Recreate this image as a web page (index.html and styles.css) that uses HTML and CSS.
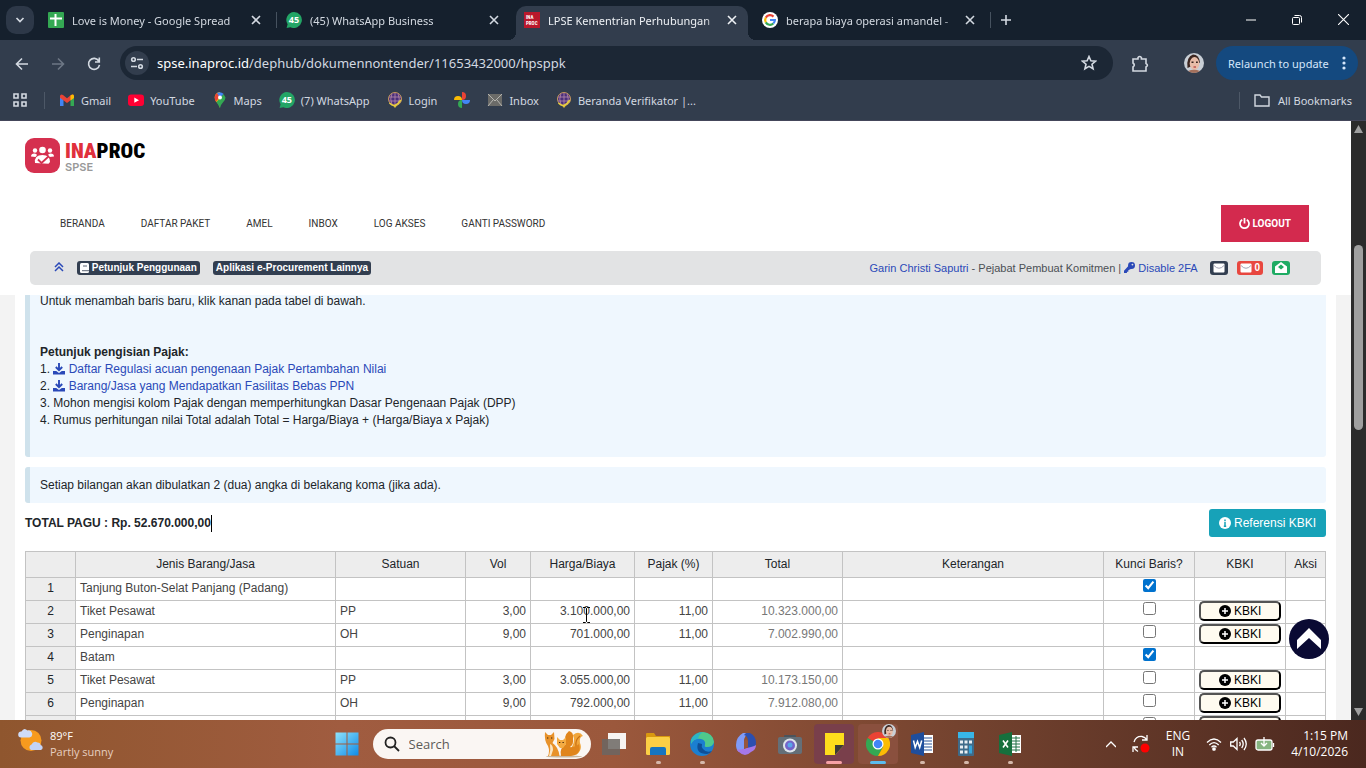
FILE: index.html
```
<!DOCTYPE html>
<html lang="id">
<head>
    <meta charset="UTF-8">
    <meta name="viewport" content="width=device-width, initial-scale=1.0">
    <title>LPSE Kementrian Perhubungan</title>
    <link rel="stylesheet" href="styles.css">
</head>
<body>
    <svg class="defs" aria-hidden="true">
        <symbol id="x" viewBox="0 0 10 10"><path d="M1 1l8 8M9 1L1 9" stroke="currentColor" stroke-width="1.6"/></symbol>
        <symbol id="wa" viewBox="0 0 16 16"><path d="M8 0a8 8 0 1 1-3.6 15.2L.6 16l1-3.700A8 8 0 0 1 8 0z" fill="#23a566"/></symbol>
        <symbol id="globe" viewBox="0 0 16 16"><path d="M4 11l4 5 4-5z" fill="#e3c13c"/><circle cx="8" cy="7" r="6.500" fill="#4a2f7c" stroke="#c99a5b"/><path d="M2 5h12M2 9h12M8 1v12M5 1.500Q2.500 7 5 12.500M11 1.500q2.500 5.500 0 11" fill="none" stroke="#b98aa8" stroke-width=".8"/><path d="M2.500 11Q8 17 13.800 8" fill="none" stroke="#e8cf3f" stroke-width="1.500"/></symbol>
        <symbol id="env" viewBox="0 0 12 10"><rect x=".5" y=".5" width="11" height="9" rx="1" fill="#fff"/><path d="M1 2.500Q6 8 11 2.500" fill="none" stroke="#99a" stroke-width=".9"/></symbol>
        <symbol id="plus" viewBox="0 0 12 12"><circle cx="6" cy="6" r="6" fill="#000"/><path d="M6 3v6M3 6h6" stroke="#fff" stroke-width="1.500"/></symbol>
        <symbol id="dl" viewBox="0 0 12 12"><path d="M6 0v7M2.800 4L6 7.200 9.200 4" fill="none" stroke="currentColor" stroke-width="1.900"/><path d="M0 8h3.200L6 10 8.800 8H12v3.500H0z" fill="currentColor"/></symbol>
        <symbol id="face" viewBox="0 0 20 20"><circle cx="10" cy="10" r="10" fill="#c9cfd6"/><path d="M3.500 15Q2 4 9 1.500q6 0 7 8z" fill="#3c2620"/><ellipse cx="10.500" cy="10.500" rx="4.800" ry="6.500" fill="#e8bda8"/><path d="M4 18q6-2.500 12 0-6 4-12 0z" fill="#a3705c"/><path d="M7.500 9.200h2M12 9.200h1.800" stroke="#33221d"/><path d="M9.500 14h2.500" stroke="#b33a3a" stroke-width="1.200"/></symbol>
    </svg>

    <!-- browser -->
    <div class="tabs">
        <button class="tab-search" aria-label="Search tabs"><svg width="10" height="10" viewBox="0 0 10 10"><path d="M1.500 3L5 6.500 8.500 3" fill="none" stroke="currentColor" stroke-width="1.700"/></svg></button>
        <div class="tab">
            <svg class="fav" viewBox="0 0 16 16"><rect width="16" height="16" rx="1" fill="#34a853"/><path d="M2 6.500h12M7.500 2v12" stroke="#fff" stroke-width="2"/></svg>
            <span class="tab-title">Love is Money - Google Spread</span>
            <button class="tab-close" aria-label="Close"><svg><use href="#x"/></svg></button>
        </div>
        <div class="tab split">
            <span class="fav wa"><svg><use href="#wa"/></svg><b>45</b></span>
            <span class="tab-title">(45) WhatsApp Business</span>
            <button class="tab-close" aria-label="Close"><svg><use href="#x"/></svg></button>
        </div>
        <div class="tab active">
            <span class="fav ina"><b>INA</b><b>PROC</b></span>
            <span class="tab-title">LPSE Kementrian Perhubungan</span>
            <button class="tab-close" aria-label="Close"><svg><use href="#x"/></svg></button>
        </div>
        <div class="tab">
            <svg class="fav" viewBox="0 0 16 16"><circle cx="8" cy="8" r="8" fill="#fff"/><g fill="none" stroke-width="2.200"><path d="M11.500 4.600A4.900 4.900 0 0 0 3.800 5.600" stroke="#ea4335"/><path d="M3.800 5.600a4.900 4.900 0 0 0 0 4.800" stroke="#fbbc05"/><path d="M3.800 10.400a4.900 4.900 0 0 0 7.500 1.100" stroke="#34a853"/><path d="M11.300 11.500A4.900 4.900 0 0 0 12.900 8H8" stroke="#4285f4"/></g></svg>
            <span class="tab-title">berapa biaya operasi amandel -</span>
            <button class="tab-close" aria-label="Close"><svg><use href="#x"/></svg></button>
        </div>
        <button class="new-tab split" aria-label="New tab"><svg width="10" height="10" viewBox="0 0 10 10"><path d="M5 0v10M0 5h10" stroke="currentColor" stroke-width="1.600"/></svg></button>
        <div class="win">
            <button aria-label="Minimize"><svg width="10" height="10" viewBox="0 0 10 10"><path d="M0 5h10" stroke="#fff"/></svg></button>
            <button aria-label="Restore"><svg width="10" height="10" viewBox="0 0 10 10" fill="none" stroke="#fff"><rect x=".5" y="2.500" width="7" height="7" rx="1"/><path d="M2.500.5h5q2 0 2 2v5"/></svg></button>
            <button aria-label="Close window"><svg width="11" height="11" viewBox="0 0 10 10"><path d="M0 0l10 10M10 0L0 10" stroke="#fff"/></svg></button>
        </div>
    </div>
    <div class="chrome">
        <div class="toolbar">
            <button aria-label="Back"><svg viewBox="0 0 16 16"><path d="M14 8H3M8 2.500L2.500 8 8 13.500"/></svg></button>
            <button class="dim" aria-label="Forward"><svg viewBox="0 0 16 16"><path d="M2 8h11M8 2.500L13.500 8 8 13.500"/></svg></button>
            <button aria-label="Reload"><svg viewBox="0 0 16 16"><path d="M12.800 5A5.500 5.500 0 1 0 13.500 8.800M13.300 1.500V6H9"/></svg></button>
            <div class="omnibox">
                <span class="site"><svg viewBox="0 0 16 16"><circle cx="4.500" cy="4.500" r="1.800"/><path d="M8 4.500h6M2 11.500h6"/><circle cx="11.500" cy="11.500" r="1.800"/></svg></span>
                <span class="url"><b>spse.inaproc.id</b>/dephub/dokumennontender/11653432000/hpsppk</span>
                <svg class="star" viewBox="0 0 16 16"><path d="M8 1.500l1.900 4.300 4.600.4-3.500 3 1.100 4.600L8 11.400l-4.100 2.400L5 9.200l-3.500-3 4.600-.4z"/></svg>
            </div>
            <button class="ext" aria-label="Extensions"><svg viewBox="0 0 18 18"><path d="M2 4h5V2.500q1.700-2 3.400 0V4H15v4.500q2.800 1.700 0 3.400V16H2v-4q2.600-2 0-4z"/></svg></button>
            <svg class="avatar"><use href="#face"/></svg>
            <button class="relaunch">Relaunch to update <svg width="4" height="16" viewBox="0 0 4 16"><circle cx="2" cy="3" r="1.600"/><circle cx="2" cy="8" r="1.600"/><circle cx="2" cy="13" r="1.600"/></svg></button>
        </div>
        <div class="bookmarks">
            <svg class="apps" viewBox="0 0 14 14" fill="none" stroke="currentColor" stroke-width="1.600"><path d="M1 1h4v4H1zM9 1h4v4H9zM1 9h4v4H1zM9 9h4v4H9z"/></svg>
            <a href="#" class="first"><svg viewBox="0 0 16 16"><path d="M1 14V4h3.500v10z" fill="#4285f4"/><path d="M11.500 14V4H15v10z" fill="#34a853"/><path d="M1 4q.5-2.500 3-1L8 6.200 12 3q2.500-1.500 3 1v1.800L8 11 1 5.800z" fill="#ea4335"/><path d="M11.500 3.500q3-2 3.500.5v2l-3.500 2.600z" fill="#fbbc04"/></svg>Gmail</a>
            <a href="#"><svg viewBox="0 0 16 16"><rect y="2.500" width="16" height="11.500" rx="3" fill="#f03"/><path d="M6.300 5.500v5.300L11 8.200z" fill="#fff"/></svg>YouTube</a>
            <a href="#"><svg viewBox="0 0 16 16"><path d="M8 0a5.500 5.500 0 0 0-5.300 6Q3 9 5.500 11 7.500 13 8 16z" fill="#fbbc04"/><path d="M8 16q.5-3 2.500-5 3-3 3-5.500L11.500 2 4.500 10z" fill="#34a853"/><path d="M2.700 5A5.500 5.500 0 0 1 5 1l3 4-4 4.500Q2.500 8 2.700 5z" fill="#ea4335"/><path d="M5 1q3.500-2 6.500.8L8 6z" fill="#4285f4"/><circle cx="8" cy="5.500" r="2" fill="#fff"/></svg>Maps</a>
            <a href="#"><span class="wa"><svg><use href="#wa"/></svg><b>45</b></span>(7) WhatsApp</a>
            <a href="#"><svg><use href="#globe"/></svg>Login</a>
            <a href="#" aria-label="Photos"><svg viewBox="0 0 16 16"><path d="M8 8V0a4 4 0 0 1 0 8z" fill="#ea4335"/><path d="M8 8h8a4 4 0 0 1-8 0z" fill="#4285f4"/><path d="M8 8v8a4 4 0 0 1 0-8z" fill="#34a853"/><path d="M8 8H0a4 4 0 0 1 8 0z" fill="#fbbc04"/></svg></a>
            <a href="#"><svg viewBox="0 0 16 16"><rect x="1" y="2" width="14" height="12" fill="#6b6b68"/><path d="M1 2l7 7 7-7M1 14l5-6M15 14l-5-6" fill="none" stroke="#b5b5b0"/></svg>Inbox</a>
            <a href="#"><svg><use href="#globe"/></svg>Beranda Verifikator |...</a>
            <a href="#" class="all"><svg viewBox="0 0 16 16" fill="none" stroke="currentColor" stroke-width="1.400"><path d="M1 3h5l1.500 2H15v9H1z"/></svg>All Bookmarks</a>
        </div>
    </div>

    <!-- page -->
    <div class="viewport">
        <div class="page">
            <header class="header">
                <a href="#" class="logo">
                    <svg width="35" height="35" viewBox="0 0 35 35"><rect width="35" height="35" rx="9" fill="#d5304f"/><g fill="#fff"><circle cx="17.500" cy="12" r="3.300"/><circle cx="10" cy="12.500" r="2.200"/><circle cx="25" cy="12.500" r="2.200"/><path d="M6 18.500q0-3 3.500-3 2 0 2.500 1.500l-1.500 2zM29 18.500q0-3-3.500-3-2 0-2.500 1.500l1.500 2z"/><path d="M10 25q-1-8 7.500-8 7.500 0 7.500 7l-1.500 1.800z"/></g><path d="M13 21.500l3.500 3.500 7.500-7" fill="none" stroke="#d5304f" stroke-width="1.800"/></svg>
                    <span class="brand"><span class="brand-name"><span>INA</span>PROC</span><span class="brand-sub">SPSE</span></span>
                </a>
                <nav class="nav">
                    <a href="#">BERANDA</a>
                    <a href="#">DAFTAR PAKET</a>
                    <a href="#">AMEL</a>
                    <a href="#">INBOX</a>
                    <a href="#">LOG AKSES</a>
                    <a href="#">GANTI PASSWORD</a>
                    <button class="logout"><svg width="11" height="11" viewBox="0 0 12 12" fill="none" stroke="#fff" stroke-width="1.900"><path d="M3.500 2a4.900 4.900 0 1 0 5 0M6 0v6"/></svg> LOGOUT</button>
                </nav>
                <div class="userbar">
                    <a href="#" class="up" aria-label="Naik"><svg width="10" height="10" viewBox="0 0 10 10" fill="none" stroke="currentColor" stroke-width="1.500"><path d="M1 5l4-4 4 4M1 9l4-4 4 4"/></svg></a>
                    <a href="#" class="badge"><svg width="9" height="10" viewBox="0 0 9 10"><rect width="9" height="10" rx="1.500" fill="#fff"/><path d="M2 7.700h7M3 3h4" stroke="#323e50" stroke-width=".8"/></svg> Petunjuk Penggunaan</a>
                    <a href="#" class="badge">Aplikasi e-Procurement Lainnya</a>
                    <p class="user"><a href="#">Garin Christi Saputri</a> - Pejabat Pembuat Komitmen | <a href="#"><svg width="11" height="11" viewBox="0 0 12 12"><circle cx="8.200" cy="3.800" r="3.800" fill="currentColor"/><circle cx="9.200" cy="2.800" r="1" fill="#e2e3e4"/><path d="M5 4L0 9.500V12h3.200v-1.500h1.500V9L8.500 7z" fill="currentColor"/></svg> Disable 2FA</a></p>
                    <a href="#" class="badge" aria-label="Pesan"><svg width="12" height="10"><use href="#env"/></svg></a>
                    <a href="#" class="badge red"><svg width="12" height="10"><use href="#env"/></svg> 0</a>
                    <a href="#" class="badge green" aria-label="Pesan terbuka"><svg width="12" height="11" viewBox="0 0 12 11"><path d="M0 4.500L6 0l6 4.500V11H0z" fill="#fff"/><path d="M3 5l3-2.500L9 5 6 7.500z" fill="#1eab63"/></svg></a>
                </div>
            </header>

            <main class="content">
                <div class="alert alert-top">
                    <p>Untuk menambah baris baru, klik kanan pada tabel di bawah.</p>
                    <br><br>
                    <p><b>Petunjuk pengisian Pajak:</b></p>
                    <p>1. <a href="#"><svg><use href="#dl"/></svg> Daftar Regulasi acuan pengenaan Pajak Pertambahan Nilai</a></p>
                    <p>2. <a href="#"><svg><use href="#dl"/></svg> Barang/Jasa yang Mendapatkan Fasilitas Bebas PPN</a></p>
                    <p>3. Mohon mengisi kolom Pajak dengan memperhitungkan Dasar Pengenaan Pajak (DPP)</p>
                    <p>4. Rumus perhitungan nilai Total adalah Total = Harga/Biaya + (Harga/Biaya x Pajak)</p>
                </div>
                <div class="alert">
                    <p>Setiap bilangan akan dibulatkan 2 (dua) angka di belakang koma (jika ada).</p>
                </div>
                <div class="pagu">
                    <b class="caret">TOTAL PAGU : Rp. 52.670.000,00</b>
                    <button class="btn-info"><svg width="12" height="12" viewBox="0 0 12 12"><circle cx="6" cy="6" r="6" fill="#fff"/><path d="M6 2.500v1.700M6 5v4.300M4.800 9.200h2.400" stroke="#17a2b8" stroke-width="1.500"/></svg> Referensi KBKI</button>
                </div>
                <table class="grid">
                    <colgroup>
                        <col class="c-no"><col class="c-jenis"><col class="c-satuan"><col class="c-vol"><col class="c-harga"><col class="c-pajak"><col class="c-total"><col><col class="c-kunci"><col class="c-kbki"><col class="c-aksi">
                    </colgroup>
                    <thead>
                        <tr><th></th><th>Jenis Barang/Jasa</th><th>Satuan</th><th>Vol</th><th>Harga/Biaya</th><th>Pajak (%)</th><th>Total</th><th>Keterangan</th><th>Kunci Baris?</th><th>KBKI</th><th>Aksi</th></tr>
                    </thead>
                    <tbody>
                        <tr><th>1</th><td>Tanjung Buton-Selat Panjang (Padang)</td><td></td><td></td><td></td><td></td><td></td><td></td><td><input type="checkbox" aria-label="Kunci baris 1" checked></td><td></td><td></td></tr>
                        <tr><th>2</th><td>Tiket Pesawat</td><td>PP</td><td class="num">3,00</td><td class="num hover">3.100.000,00<svg class="ibeam" width="7" height="16" viewBox="0 0 7 16" fill="none" stroke="#000"><path d="M0 .5h2.500l1 1 1-1H7M3.500 1.500v13M0 15.500h2.500l1-1 1 1H7"/></svg></td><td class="num">11,00</td><td class="num ro">10.323.000,00</td><td></td><td><input type="checkbox" aria-label="Kunci baris 2"></td><td><button class="kbki"><svg><use href="#plus"/></svg> KBKI</button></td><td></td></tr>
                        <tr><th>3</th><td>Penginapan</td><td>OH</td><td class="num">9,00</td><td class="num">701.000,00</td><td class="num">11,00</td><td class="num ro">7.002.990,00</td><td></td><td><input type="checkbox" aria-label="Kunci baris 3"></td><td><button class="kbki"><svg><use href="#plus"/></svg> KBKI</button></td><td></td></tr>
                        <tr><th>4</th><td>Batam</td><td></td><td></td><td></td><td></td><td></td><td></td><td><input type="checkbox" aria-label="Kunci baris 4" checked></td><td></td><td></td></tr>
                        <tr><th>5</th><td>Tiket Pesawat</td><td>PP</td><td class="num">3,00</td><td class="num">3.055.000,00</td><td class="num">11,00</td><td class="num ro">10.173.150,00</td><td></td><td><input type="checkbox" aria-label="Kunci baris 5"></td><td><button class="kbki"><svg><use href="#plus"/></svg> KBKI</button></td><td></td></tr>
                        <tr><th>6</th><td>Penginapan</td><td>OH</td><td class="num">9,00</td><td class="num">792.000,00</td><td class="num">11,00</td><td class="num ro">7.912.080,00</td><td></td><td><input type="checkbox" aria-label="Kunci baris 6"></td><td><button class="kbki"><svg><use href="#plus"/></svg> KBKI</button></td><td></td></tr>
                        <tr><th></th><td></td><td></td><td></td><td></td><td></td><td></td><td></td><td><input type="checkbox" aria-label="Kunci baris berikutnya"></td><td><button class="kbki" aria-label="KBKI"></button></td><td></td></tr>
                    </tbody>
                </table>
            </main>
            <button class="to-top" aria-label="Ke atas"><svg width="24" height="22" viewBox="0 0 24 22"><path d="M12 0l12 12v9L12 10 0 21v-9z" fill="#fff"/></svg></button>
        </div>
        <div class="scrollbar">
            <svg width="9" height="8" viewBox="0 0 9 8"><path d="M4.500 0L9 8H0z" fill="#9f9f9f"/></svg>
            <div class="track"><div class="thumb"></div></div>
            <svg width="9" height="8" viewBox="0 0 9 8"><path d="M4.500 8L9 0H0z" fill="#9f9f9f"/></svg>
        </div>
    </div>

    <!-- taskbar -->
    <footer class="taskbar">
        <div class="weather">
            <svg width="26" height="24" viewBox="0 0 26 24"><circle cx="13" cy="12.500" r="10.500" fill="#f79a1e"/><path d="M3 9.500a3 3 0 0 1 .5-6Q6-1 9.500 2.500a3.500 3.500 0 0 1 2 7z" fill="#cfdcf8"/><path d="M13 22a3 3 0 0 1 .5-5.500q2-4 6-2 3 .3 3 2.500a2.600 2.600 0 0 1 .5 5z" fill="#c3d3f7"/></svg>
            <p>89°F<span>Partly sunny</span></p>
        </div>
        <div class="apps-row">
            <button class="app" aria-label="Start"><svg viewBox="0 0 24 24"><defs><linearGradient id="win" x2="1" y2="1"><stop stop-color="#8fe3fb"/><stop offset="1" stop-color="#0f8be8"/></linearGradient></defs><path d="M.5.5h11v11H.5zM12.500.5h11v11h-11zM.5 12.500h11v11H.5zM12.500 12.500h11v11h-11z" fill="url(#win)"/></svg></button>
            <label class="search">
                <svg width="16" height="16" viewBox="0 0 16 16" fill="none" stroke="#222" stroke-width="1.800"><circle cx="6.500" cy="6.500" r="5"/><path d="M10 10l5 5"/></svg>
                <input type="text" placeholder="Search">
                <svg width="40" height="27" viewBox="0 0 40 27"><ellipse cx="20" cy="25.500" rx="18" ry="1" fill="#c9b79d"/><path d="M29 4q6-5 10 1-4 1-3 7 3 7-4 12-4-1-6-6 6-6 3-14z" fill="#f0a63c"/><path d="M36 5q-5 4-4 10 2 4-2 9" fill="none" stroke="#c96f12" stroke-width="1.200"/><path d="M17 25q-2-8 5-12-3-8 3-13 5 1 4 8 1 5-3 8 5 1 9-3 3 10-8 12z" fill="#e0851c"/><path d="M1 1l3 3h3l3-3 .5 7-2 4q6 4 7 13H4q2-5 0-10Q0 10 1 1z" fill="#e8922a"/><path d="M13 6l3 3h3l3-3v7l-3 4h-3l-3-4z" fill="#f4ab42"/><path d="M6 13q3 1 3 6l-2 6H5q2-6 1-12z" fill="#fbe6c4"/><path d="M3 7h1.300M7 7h1.300M15 11.500h1.300M18.500 11.500h1.300" stroke="#3b210b" stroke-width="1.200"/></svg>
            </label>
            <button class="app" aria-label="Task view"><svg viewBox="0 0 24 24"><rect x="6" y="1" width="18" height="16" fill="#f6f4f2"/><rect y="7" width="18" height="16" fill="#6b6663" opacity=".85"/></svg></button>
            <button class="app run" aria-label="File Explorer"><svg viewBox="0 0 24 24"><path d="M0 2q0-1 1-1h7l2 3h14v6H0z" fill="#d9980f"/><rect y="5" width="24" height="18" rx="1.500" fill="#fbcf45"/><path d="M4 23v-6q0-2 2-2h12q2 0 2 2v6z" fill="#1675bf"/></svg></button>
            <button class="app run" aria-label="Edge"><svg viewBox="0 0 24 24"><circle cx="12" cy="12" r="12" fill="#1b7fd0"/><path d="M1 8Q5 0 13 0q10 1 11 10-1 5-7 5-3 0-2-2 1-5-4-6-7-1-10 5z" fill="#4fc98c"/><path d="M1 8q4-7 12-8-4 2-5 7-4 0-7 4z" fill="#2bb3c9"/><path d="M8 11q-3 11 9 11 3 0 5-3-6 2-9-2-2-2-1-5z" fill="#0e4f97"/></svg></button>
            <button class="app" aria-label="Microsoft 365"><svg viewBox="0 0 24 24"><path d="M15 1H9Q2 5 2 13q0 5 3 7l5-3V9q0-5 5-8z" fill="#7f9bf7"/><path d="M12 1h4q6 3 6 10 0 5-5 7l-3-2V9q0-5-4-6z" fill="#2b4fb0"/><path d="M22 13q0 5-5 7-3 3-6 3t-6-3q-2-1-2-3 3 1 6 0l8-2q4-1 5-2z" fill="#a578e8"/><path d="M10 9q2-3 4 0v6l-4 2z" fill="#96563c"/></svg></button>
            <button class="app" aria-label="Camera"><svg viewBox="0 0 24 24"><rect x="6" y="3" width="12" height="4" rx="1" fill="#4b545c"/><rect y="5" width="24" height="17" rx="2" fill="#646f78"/><circle cx="12" cy="13.500" r="7" fill="#dfe5ea"/><circle cx="12" cy="13.500" r="5" fill="#7465c9"/><circle cx="12" cy="13" r="2.500" fill="#5aa6ea"/></svg></button>
            <button class="app run note" aria-label="Sticky Notes"><svg viewBox="0 0 24 24"><path d="M3 1h19v12l-9 10H3z" fill="#fddd1c"/><path d="M13 13h9l-9 10z" fill="#3b3a38"/></svg></button>
            <button class="app run current" aria-label="Chrome"><svg viewBox="0 0 24 24"><path d="M12 12L1.600 6A12 12 0 0 1 22.400 6z" fill="#ea4335"/><path d="M12 12L1.600 6A12 12 0 0 0 12 24l5-9z" fill="#34a853"/><path d="M12 6h10.400A12 12 0 0 1 12 24l5-9z" fill="#fbbc04"/><circle cx="12" cy="12" r="5.500" fill="#fff"/><circle cx="12" cy="12" r="4.300" fill="#4285f4"/></svg><svg class="mini"><use href="#face"/></svg></button>
            <button class="app run" aria-label="Word"><svg viewBox="0 0 24 24"><rect x="12" y="3" width="11" height="18" fill="#fff"/><path d="M14 6h8M14 9h8M14 12h8M14 15h8M14 18h8" stroke="#2b579a" stroke-width="1.200"/><path d="M1 3l13-3v24L1 21z" fill="#1f4e9c"/><path d="M3.500 8.500l1.700 7 2.300-6 2.200 6 2-7" fill="none" stroke="#fff" stroke-width="1.500"/></svg></button>
            <button class="app run" aria-label="Calculator"><svg viewBox="0 0 24 24"><rect x="4" width="16" height="24" rx="1" fill="#3f6b89"/><rect x="4" width="16" height="6" fill="#38b6e8"/><path d="M6 10h3M10.500 10h3M15 10h3M6 15h3M10.500 15h3M6 20h3M10.500 20h3" stroke="#e8eef2" stroke-width="3"/><path d="M16.500 13.500v8" stroke="#36a4d8" stroke-width="3"/></svg></button>
            <button class="app run" aria-label="Excel"><svg viewBox="0 0 24 24"><rect x="12" y="3" width="11" height="18" fill="#fff"/><path d="M14 6h8M14 9h8M14 12h8M14 15h8M14 18h8M18 4v16" stroke="#217346"/><path d="M1 3l13-3v24L1 21z" fill="#16703d"/><path d="M5 8.500l5 7M10 8.500l-5 7" fill="none" stroke="#fff" stroke-width="1.600"/></svg></button>
        </div>
        <div class="tray">
            <svg width="10" height="8" viewBox="0 0 10 8"><path d="M0 7l5-5 5 5"/></svg>
            <svg width="18" height="18" viewBox="0 0 18 18"><path d="M2 7q2-6 8-5.500 3 .5 5 3.500M15 0v5h-5M1 17v-5h5M2 12q1 3 4 4.500"/><circle cx="13" cy="13" r="4.500" fill="red" stroke="none"/></svg>
            <p class="lang">ENG<br>IN</p>
            <div class="status">
                <svg width="16" height="14" viewBox="0 0 16 14"><path d="M1 5.500q7-7 14 0M3.300 8q4.700-4.700 9.400 0M5.500 10.300q2.500-2.500 5 0"/><circle cx="8" cy="12" r="1.200" fill="#fff"/></svg>
                <svg width="17" height="14" viewBox="0 0 17 14"><path d="M.7 5v4h2.600L7 12.500v-11L3.300 5zM9.500 5q1.500 2 0 4M11.700 3q3 4 0 8M14 1q4.500 6 0 12"/></svg>
                <svg width="20" height="14" viewBox="0 0 20 14"><rect x="1" y="3" width="16" height="10" rx="2" fill="#86b581"/><path d="M18.500 6v4M9 0v9M6 6l3 3 3-3"/></svg>
            </div>
            <p class="clock">1:15 PM<br>4/10/2026</p>
        </div>
    </footer>
</body>
</html>
```
FILE: styles.css
```
:root {
    --strip: #15202d;
    --chrome: #323d4d;
    --chrome-text: #d3d9e1;
    --link: #2a49b8;
    --badge: #323e50;
    --line: #c3c3c3;
    --ui-font: "Noto Sans", "Open Sans", sans-serif;
}

* {
    margin: 0;
    padding: 0;
    box-sizing: border-box;
}

body {
    height: 100vh;
    display: flex;
    flex-direction: column;
    overflow: hidden;
    font-family: "Liberation Sans", Arial, sans-serif;
    font-size: 12px;
    line-height: 17px;
    color: #212529;
}

a {
    color: var(--link);
    text-decoration: none;
}

button {
    border: none;
    background: none;
    font: inherit;
    color: inherit;
    cursor: pointer;
}

svg {
    flex: none;
}

.defs {
    display: none;
}

/* tab strip */
.tabs {
    display: flex;
    align-items: center;
    height: 40px;
    padding-left: 6px;
    background: var(--strip);
    color: var(--chrome-text);
    font-family: var(--ui-font);
    font-size: 11px;
}

.tab-search {
    width: 28px;
    height: 28px;
    margin-right: 4px;
    border-radius: 10px;
    background: #2d3848;
}

.tab {
    position: relative;
    z-index: 0;
    display: flex;
    flex: 0 1 238px;
    align-items: center;
    gap: 8px;
    height: 100%;
    padding: 0 15px 0 10px;
    min-width: 0;
}

.split::before {
    content: "";
    position: absolute;
    left: 0;
    top: 12px;
    width: 1px;
    height: 16px;
    background: #46525f;
}

.tab.active {
    color: #eef1f5;
}

.tab.active::before {
    content: "";
    position: absolute;
    z-index: -1;
    inset: 6px 4px 0 2px;
    border-radius: 10px 10px 0 0;
    background: var(--chrome);
}

.tab.active::after {
    content: "";
    position: absolute;
    z-index: -1;
    inset: auto -4px 0 -6px;
    height: 8px;
    background:
        radial-gradient(circle at 0 0, transparent 8px, var(--chrome) 8px) left / 8px 8px no-repeat,
        radial-gradient(circle at 100% 0, transparent 8px, var(--chrome) 8px) right / 8px 8px no-repeat;
}

.fav {
    width: 16px;
    height: 16px;
    flex: none;
}

.tab-title {
    flex: 1;
    overflow: hidden;
    white-space: nowrap;
    mask-image: linear-gradient(to right, #000 calc(100% - 14px), transparent);
}

.tab-close {
    display: flex;
}

.tab-close svg {
    width: 10px;
    height: 10px;
}

.wa {
    position: relative;
    width: 16px;
    height: 16px;
}

.wa svg {
    display: block;
    width: 16px;
    height: 16px;
}

.wa b {
    position: absolute;
    inset: 0;
    font-size: 9px;
    line-height: 16px;
    text-align: center;
    color: #fff;
}

.ina {
    display: flex;
    flex-direction: column;
    justify-content: center;
    padding-left: 2px;
    background: #b9182b;
    color: #fff;
    font: 5px/6px "Roboto Condensed", Roboto, sans-serif;
}

.new-tab {
    position: relative;
    height: 40px;
    padding: 0 11px;
}

.win {
    display: flex;
    margin-left: auto;
}

.win button {
    width: 46px;
    height: 40px;
}

/* toolbar */
.chrome {
    background: var(--chrome);
    color: var(--chrome-text);
    border-bottom: 1px solid #44465a;
    font-family: var(--ui-font);
    font-size: 11px;
}

.toolbar {
    display: flex;
    align-items: center;
    height: 46px;
    padding: 0 8px 0 4px;
}

.toolbar > button {
    width: 36px;
    height: 34px;
}

.toolbar svg {
    width: 16px;
    height: 16px;
    vertical-align: middle;
    fill: none;
    stroke: currentColor;
    stroke-width: 1.6px;
}

.toolbar .dim {
    color: #6d7785;
}

.omnibox {
    display: flex;
    flex: 1;
    align-items: center;
    height: 34px;
    margin-left: 8px;
    padding: 0 16px 0 5px;
    border-radius: 17px;
    background: #1c2735;
}

.site {
    width: 24px;
    height: 24px;
    border-radius: 12px;
    background: #323d4d;
    text-align: center;
    line-height: 22px;
}

.url {
    flex: 1;
    margin-left: 8px;
    font-size: 13px;
}

.url b {
    font-weight: 400;
    color: #fff;
}

.toolbar .ext {
    width: 54px;
}

.toolbar .ext svg {
    width: 18px;
    height: 18px;
}

.toolbar .avatar {
    width: 20px;
    height: 20px;
    margin: 0 12px 0 17px;
    stroke: none;
}

.toolbar .relaunch {
    display: flex;
    align-items: center;
    justify-content: space-between;
    width: 142px;
    padding: 0 12px;
    border-radius: 17px;
    background: #14497f;
    color: #d5e6fb;
    white-space: nowrap;
}

.toolbar .relaunch svg {
    width: 4px;
    fill: currentColor;
    stroke: none;
}

.bookmarks {
    display: flex;
    align-items: center;
    gap: 17px;
    height: 34px;
    padding: 0 14px 6px 13px;
}

.bookmarks a {
    display: flex;
    align-items: center;
    gap: 6px;
    color: inherit;
    white-space: nowrap;
}

.bookmarks a svg {
    width: 16px;
    height: 16px;
}

.bookmarks .apps {
    width: 14px;
    height: 14px;
}

.bookmarks .first,
.bookmarks .all {
    padding-left: 14px;
    border-left: 1px solid #4d5867;
}

.bookmarks .all {
    gap: 8px;
    margin-left: auto;
}

/* page */
.viewport {
    display: flex;
    flex: 1;
    min-height: 0;
}

.page {
    position: relative;
    flex: 1;
    overflow: hidden;
    background: #f3f3f3;
}

.header {
    position: relative;
    z-index: 1;
    padding: 17px 30px 10px;
    background: #fff;
}

.logo {
    display: flex;
    gap: 5px;
    margin-left: -5px;
}

.brand {
    display: flex;
    flex-direction: column;
    padding-top: 2px;
}

.brand-name {
    font: 900 21px/22px "Liberation Sans Narrow", "Roboto Condensed", "Liberation Sans", sans-serif;
    color: #000;
}

.brand-name span {
    color: #e0303c;
}

.brand-sub {
    font: 600 11px/10px Inter, sans-serif;
    color: #999;
}

.nav {
    display: flex;
    align-items: center;
    gap: 36px;
    margin-top: 32px;
    padding: 0 12px 0 30px;
    font-family: Roboto, sans-serif;
    font-size: 10px;
}

.nav a {
    color: #333;
}

.logout {
    width: 88px;
    height: 37px;
    margin-left: auto;
    background: #d32a4e;
    color: #fff;
    font-weight: bold;
}

.logout svg {
    vertical-align: -2px;
}

.userbar {
    display: flex;
    align-items: center;
    height: 34px;
    margin-top: 9px;
    padding: 0 31px 0 24px;
    border-radius: 5px;
    background: #e2e3e4;
    color: #4b4f54;
    font-size: 11px;
}

.up {
    margin-right: 13px;
}

.badge {
    height: 14px;
    margin-right: 13px;
    padding: 0 3px;
    border-radius: 3px;
    background: var(--badge);
    color: #fff;
    font-size: 10px;
    font-weight: bold;
    line-height: 14px;
    white-space: nowrap;
}

.badge svg {
    vertical-align: -2px;
}

.user {
    margin: 0 12px 0 auto;
}

.user svg {
    vertical-align: -1px;
}

.user ~ .badge {
    margin-right: 9px;
}

.user ~ .badge:last-child {
    margin-right: 0;
}

.red {
    background: #e8473f;
}

.green {
    background: #1eab63;
}

.content {
    margin: -2px 15px 0;
    padding: 0 10px;
    background: #fff;
}

.alert {
    margin-bottom: 10px;
    padding: 10px 10px 9px;
    border-left: 5px solid #cfe2ec;
    border-radius: 3px;
    background: #eff7fe;
}

.alert-top {
    padding: 0 10px 28px;
}

.alert svg {
    width: 12px;
    height: 12px;
    vertical-align: -2px;
}

.pagu {
    display: flex;
    align-items: center;
    justify-content: space-between;
    margin: -4px 0 14px;
}

.caret {
    border-right: 1px solid #000;
}

.btn-info {
    height: 28px;
    padding: 0 10px;
    border-radius: 3px;
    background: #17a2b8;
    color: #fff;
}

.btn-info svg {
    vertical-align: -2px;
}

/* item grid */
.grid {
    width: 100%;
    table-layout: fixed;
    border-collapse: collapse;
}

.grid th,
.grid td {
    height: 23px;
    padding: 0 4px;
    border: 1px solid var(--line);
    line-height: 20px;
    vertical-align: top;
}

.grid th {
    background: #ededed;
    font-weight: 400;
    text-align: center;
}

.grid thead th {
    height: 26px;
    line-height: 24px;
    white-space: nowrap;
}

.grid td {
    color: #444;
}

.c-no { width: 50px; }
.c-jenis { width: 260px; }
.c-satuan { width: 130px; }
.c-vol { width: 65px; }
.c-harga { width: 104px; }
.c-pajak { width: 78px; }
.c-total { width: 130px; }
.c-kunci { width: 91px; }
.c-kbki { width: 91px; }
.c-aksi { width: 40px; }

.grid .num {
    text-align: right;
}

.grid .ro {
    color: #777;
}

.hover {
    position: relative;
}

.ibeam {
    position: absolute;
    right: 44px;
    top: 6px;
}

.grid input {
    display: block;
    width: 13px;
    height: 13px;
    margin: 1px auto 0;
    accent-color: #0072ce;
}

.kbki {
    display: block;
    width: 100%;
    height: 20px;
    border: 2px outset #000;
    border-radius: 5px;
    background: #fffbf0;
    color: #000;
    line-height: 16px;
}

.kbki svg {
    width: 12px;
    height: 12px;
    vertical-align: -2px;
}

.to-top {
    position: absolute;
    right: 22px;
    bottom: 61px;
    width: 40px;
    height: 40px;
    border-radius: 50%;
    background: #0a0a33;
}

.to-top svg {
    vertical-align: middle;
}

.scrollbar {
    display: flex;
    flex-direction: column;
    align-items: center;
    width: 15px;
    padding: 4px 0;
    background: #2b2b2b;
}

.track {
    flex: 1;
    padding-top: 112px;
}

.thumb {
    width: 9px;
    height: 40%;
    border-radius: 5px;
    background: #9f9f9f;
}

/* taskbar */
.taskbar {
    display: grid;
    grid-template-columns: 1fr auto 1fr;
    align-items: center;
    height: 48px;
    background: linear-gradient(to right, #8f562e, #a05c40 25%, #9b583c 45%, #74432f 70%, #4b281f);
    color: #fff;
    font-family: "Open Sans", "Noto Sans", sans-serif;
    line-height: 16px;
}

.weather {
    display: flex;
    gap: 6px;
    padding-left: 18px;
    font-size: 11px;
}

.weather span {
    display: block;
    color: #e6cfc0;
}

.apps-row {
    display: flex;
    align-items: center;
    padding-right: 10px;
}

.app {
    position: relative;
    width: 40px;
    height: 40px;
    margin: 0 2px;
    border-radius: 4px;
}

.app > svg {
    width: 24px;
    height: 24px;
    vertical-align: middle;
}

.run::after {
    content: "";
    position: absolute;
    left: 18px;
    bottom: 0;
    width: 5px;
    height: 3px;
    border-radius: 2px;
    background: #d5b8aa;
}

.note {
    background: #793f4b;
}

.note::after,
.current::after {
    left: 12px;
    width: 16px;
    background: #f7a1a6;
}

.current {
    background: #8a503e;
}

.current::after {
    background: #5bbcee;
}

.app .mini {
    position: absolute;
    right: 2px;
    top: 0;
    width: 14px;
    height: 14px;
}

.search {
    display: flex;
    align-items: center;
    width: 218px;
    height: 30px;
    margin: 0 1px 0 4px;
    padding: 0 7px 0 11px;
    border-radius: 15px;
    background: #faf6f3;
}

.search input {
    flex: 1;
    min-width: 0;
    margin-left: 9px;
    border: none;
    background: none;
    font: 13px "Open Sans", sans-serif;
}

.search input::placeholder {
    color: #5c5a58;
}

.tray {
    display: flex;
    align-items: center;
    justify-content: flex-end;
    gap: 16px;
    padding-right: 18px;
}

.tray svg {
    fill: none;
    stroke: #fff;
    stroke-width: 1.3px;
}

.lang {
    text-align: center;
}

.status {
    display: flex;
    gap: 8px;
}

.clock {
    text-align: right;
}
```
